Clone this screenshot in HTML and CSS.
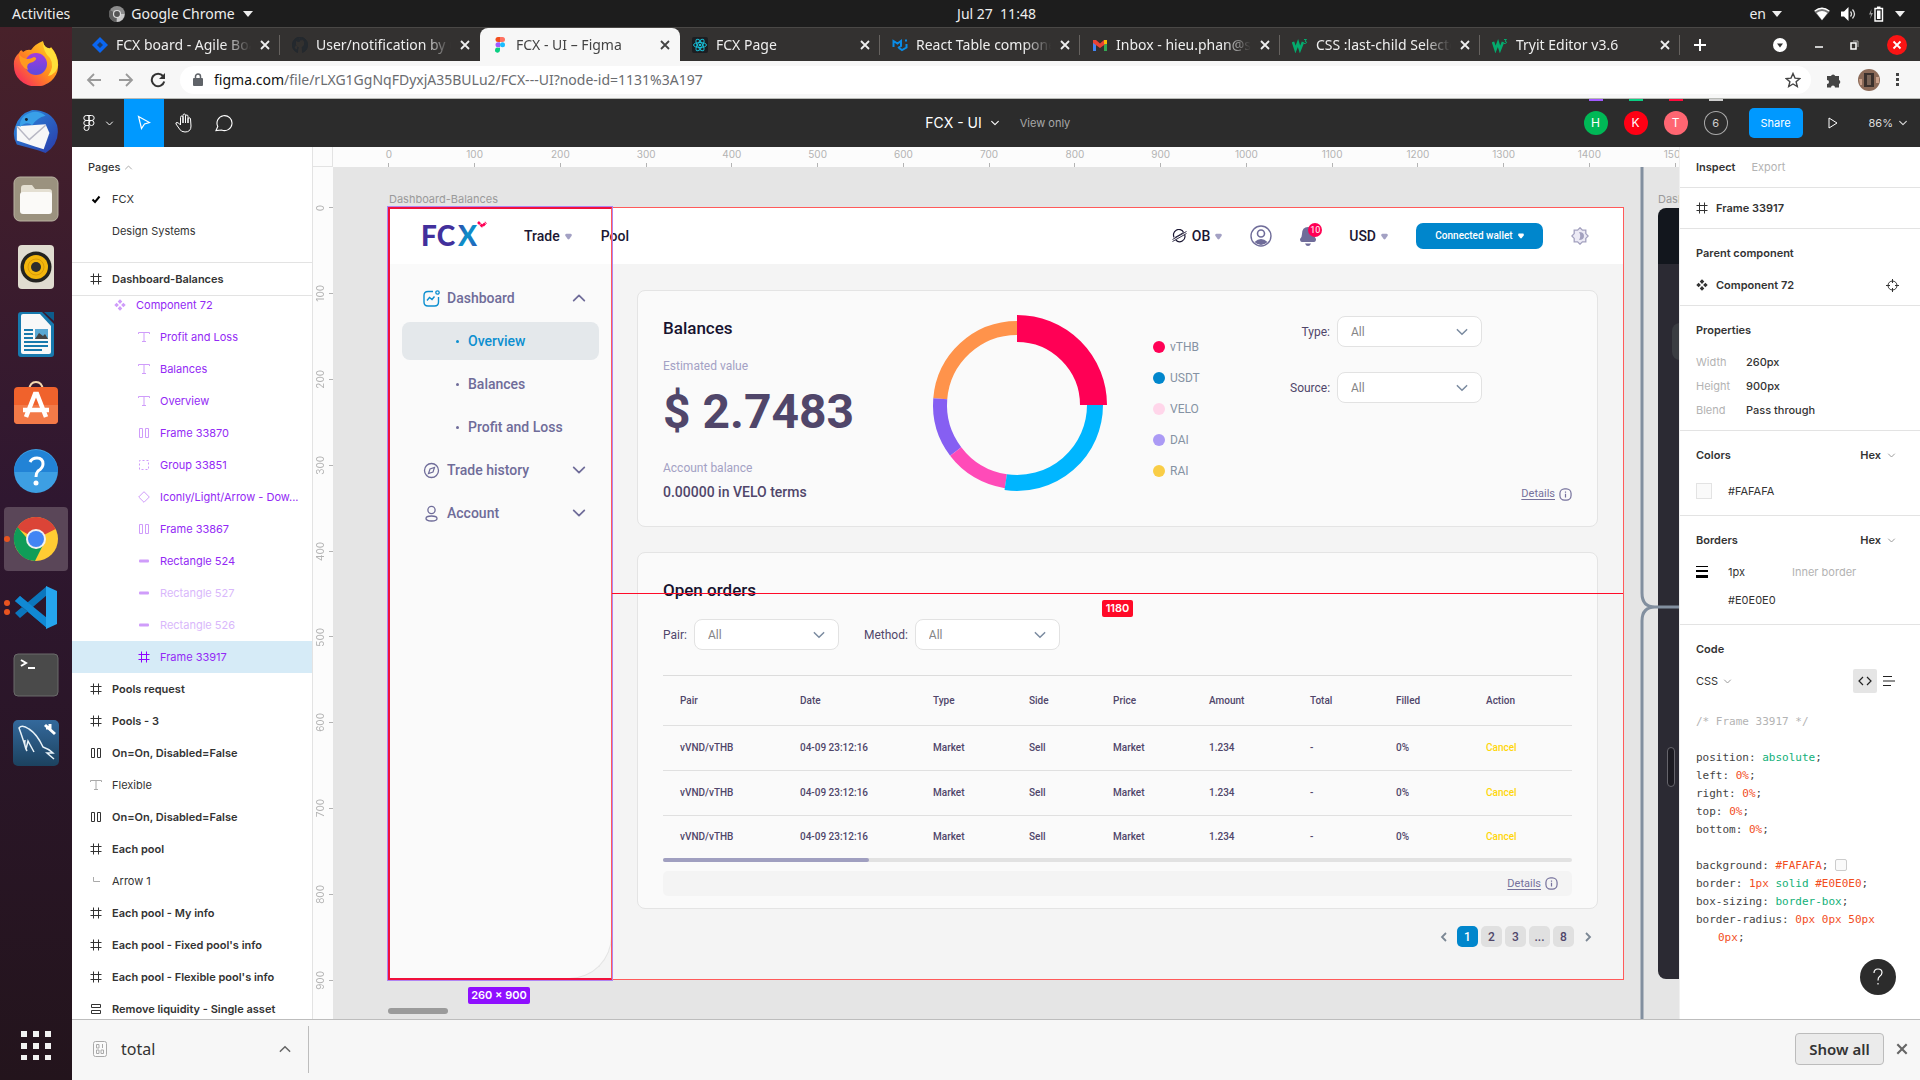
FILE: index.html
```html
<!DOCTYPE html>
<html lang="en">
<head>
<meta charset="utf-8">
<title>FCX - UI – Figma</title>
<link rel="stylesheet" href="styles.css">
</head>
<body>
<svg class="sprite" aria-hidden="true">
  <defs>
    <linearGradient id="g-x" x1="0" y1="0" x2="1" y2="1"><stop offset="0" stop-color="#3b2f9e"/><stop offset=".5" stop-color="#0e8fc9"/><stop offset="1" stop-color="#2a4fb5"/></linearGradient>
    <linearGradient id="g-fox" x1="1" y1="0" x2="0" y2="1"><stop offset="0" stop-color="#ffe226"/><stop offset=".5" stop-color="#ff8a1f"/><stop offset="1" stop-color="#f5156c"/></linearGradient>
    <linearGradient id="g-globe" x1="0" y1="0" x2="0" y2="1"><stop offset="0" stop-color="#a23be0"/><stop offset="1" stop-color="#5a4bdc"/></linearGradient>
    <linearGradient id="g-bird" x1="0" y1="0" x2="1" y2="1"><stop offset="0" stop-color="#2b8ee0"/><stop offset="1" stop-color="#2a3aa8"/></linearGradient>
    <linearGradient id="g-sea" x1="0" y1="0" x2="0" y2="1"><stop offset="0" stop-color="#34699c"/><stop offset="1" stop-color="#1c425f"/></linearGradient>
  </defs>
  <symbol id="i-frame" viewBox="0 0 12 12"><path d="M3.500 0.500v11M8.500 0.500v11M0.500 3.500h11M0.500 8.500h11" fill="none" stroke="currentColor"/></symbol>
  <symbol id="i-text" viewBox="0 0 12 12"><path d="M.5 3V1.500h11V3M6 1.500v9M4 10.500h4" fill="none" stroke="currentColor"/></symbol>
  <symbol id="i-cols" viewBox="0 0 12 12"><path d="M1.500 1.500h3v9h-3zM7.500 1.500h3v9h-3z" fill="none" stroke="currentColor"/></symbol>
  <symbol id="i-rows" viewBox="0 0 12 12"><path d="M1.500 1.500h9v3h-9zM1.500 7.500h9v3h-9z" fill="none" stroke="currentColor"/></symbol>
  <symbol id="i-group" viewBox="0 0 12 12"><path d="M1.500 1.500h9v9h-9z" fill="none" stroke="currentColor" stroke-dasharray="2 2" stroke-dashoffset="1"/></symbol>
  <symbol id="i-diamond" viewBox="0 0 12 12"><path d="M6 .7 11.300 6 6 11.300.7 6z" fill="none" stroke="currentColor"/></symbol>
  <symbol id="i-line" viewBox="0 0 12 12"><rect x="1" y="4.500" width="10" height="3" rx="1" fill="currentColor"/></symbol>
  <symbol id="i-elbow" viewBox="0 0 12 12"><path d="M3.500 2v4.500H10" fill="none" stroke="currentColor"/></symbol>
  <symbol id="i-comp" viewBox="0 0 12 12"><path d="M6 .3 8.300 2.600 6 4.900 3.700 2.600zM6 7.100l2.300 2.300L6 11.700 3.700 9.400zM2.600 3.700 4.900 6 2.600 8.300.3 6zM9.400 3.700 11.700 6 9.400 8.300 7.100 6z" fill="currentColor"/></symbol>
  <symbol id="i-down" viewBox="0 0 12 12"><path d="M2 4l4 4 4-4" fill="none" stroke="currentColor" stroke-width="1.300" stroke-linecap="round" stroke-linejoin="round"/></symbol>
  <symbol id="i-up" viewBox="0 0 12 12"><path d="M2 8l4-4 4 4" fill="none" stroke="currentColor" stroke-width="1.300" stroke-linecap="round" stroke-linejoin="round"/></symbol>
  <symbol id="i-x" viewBox="0 0 12 12"><path d="M2 2l8 8M10 2l-8 8" fill="none" stroke="currentColor" stroke-width="1.800"/></symbol>
  <symbol id="i-tri" viewBox="0 0 10 6"><path d="M0 0h10L5 6z" fill="currentColor"/></symbol>
  <symbol id="i-drop" viewBox="0 0 8 8"><path d="M1.500.8h5Q8.300 1.200 7.600 3.200L5 6.800Q4 7.800 3 6.800L.4 3.200Q-.3 1.200 1.500.8z" fill="currentColor"/></symbol>
  <symbol id="i-info" viewBox="0 0 14 14"><rect x="1" y="1" width="12" height="12" rx="5" fill="none" stroke="currentColor" stroke-width="1.300"/><path d="M7 6.200v4M7 3.800v1.200" stroke="currentColor" stroke-width="1.300"/></symbol>
  <symbol id="i-w3" viewBox="0 0 16 16"><path d="M1 5l2.500 7.500L6 6l2 6.500L11 5" fill="none" stroke="#04aa6d" stroke-width="2.600"/><path d="M12 2.500h2.500L13 4.200q2 .3 1.300 1.800-.8 1-2.300.4" fill="none" stroke="#04aa6d"/></symbol>
</svg>

<header class="sysbar">
  <div class="sys-left"><span>Activities</span>
    <span class="sys-app"><svg width="16" height="16" viewBox="0 0 16 16"><circle cx="8" cy="8" r="8" fill="#8c8c8c"/><path d="M8 8 1 4A8 8 0 0 0 7 16z" fill="#606060"/><path d="M8 8h7.500A8 8 0 0 1 8 16z" fill="#c9c9c9"/><circle cx="8" cy="8" r="3.500" fill="#555" stroke="#ddd" stroke-width="1.200"/></svg>Google Chrome<svg width="10" height="6"><use href="#i-tri"/></svg></span></div>
  <time class="clock">Jul 27&nbsp; 11:48</time>
  <div class="sys-right"><span class="lang">en<svg width="10" height="6"><use href="#i-tri"/></svg></span>
    <svg width="16" height="14" viewBox="0 0 16 14"><path d="M0 4Q8-2.500 16 4L8 13.500z" fill="#777"/><path d="M.8 4Q8-1.500 15.200 4" fill="none" stroke="#fff" stroke-width="1.300"/><path d="M2.500 6Q8 2 13.500 6L8 13z" fill="#fff"/></svg>
    <svg width="16" height="14" viewBox="0 0 16 14"><path d="M0 4.500h3L7.500 0v14L3 9.500H0z" fill="#fff"/><path d="M9.500 4.500q2 2.500 0 5M11.500 2.500q4 4.500 0 9" fill="none" stroke="#ddd" stroke-width="1.300"/></svg>
    <svg width="16" height="16" viewBox="0 0 16 16"><path d="M3.500 3 1 8.500h2L2 13l3-6H3z" fill="#999"/><path d="M7 2.500h7.500v12.500H7z" fill="none" stroke="#fff" stroke-width="1.400"/><path d="M9 4.500h3.500v8.500H9zM9 .5h3.500V2H9z" fill="#fff"/></svg>
    <svg width="10" height="6"><use href="#i-tri"/></svg></div>
</header>

<div class="desktop">
<nav class="dock" aria-label="Dock">
  <a href="#" aria-label="Firefox"><svg viewBox="0 0 46 46"><path d="M6 13Q8 8 10 12 14 9 18 10 22 4 30 1 31 8 36 10L38 7Q46 16 45 27A22 20 0 0 1 1 26Q0 18 6 13z" fill="url(#g-fox)"/><circle cx="23" cy="24" r="11" fill="url(#g-globe)"/><path d="M6 14Q12 22 21 17 26 18 20 22 12 23 15 30 6 26 6 14z" fill="#ff9a1f"/><path d="M30 2Q30 12 37 18 42 26 35 36 44 34 45 25 44 14 38 8 32 9 30 2z" fill="#ffe03a"/></svg></a>
  <a href="#" aria-label="Thunderbird"><svg viewBox="0 0 48 48"><path d="M2 20Q6 6 20 2 40 2 46 18 50 36 34 47L26 44 4 38Q-1 30 2 20z" fill="url(#g-bird)"/><path d="M4 19 34 17 38 26 32 43 22 40 4 34z" fill="#f7f7f7"/><path d="M4 19 17 33 34 18" fill="none" stroke="#b8b8c4" stroke-width="1.500"/><path d="M12 8Q24 0 34 8 25 10 20 18 14 13 7 20 7 12 12 8z" fill="#39a0e8"/><circle cx="14" cy="12" r="1.500" fill="#123"/></svg></a>
  <a href="#" aria-label="Files"><svg viewBox="0 0 46 46"><rect x="1" y="1" width="44" height="44" rx="6" fill="#9b927f" stroke="#b9b2a2"/><path d="M8 12q0-3 3-3h8l3 4h14q3 0 3 3v18H8z" fill="#e4dfd2"/><rect x="7" y="16" width="32" height="22" rx="3" fill="#fbfaf8"/></svg></a>
  <a href="#" aria-label="Rhythmbox"><svg viewBox="0 0 46 46"><rect x="5" y="1" width="36" height="44" rx="4" fill="#e0dcd0"/><circle cx="23" cy="23" r="15.500" fill="#23231f"/><circle cx="23" cy="23" r="12" fill="#f3b60c"/><circle cx="23" cy="23" r="8" fill="none" stroke="#d99a08"/><circle cx="23" cy="23" r="5" fill="#2d2d2d"/></svg></a>
  <a href="#" aria-label="Writer"><svg viewBox="0 0 46 46"><path d="M5 3q0-3 3-3h21l12 12v30q0 3-3 3H8q-3 0-3-3z" fill="#1779ad"/><path d="M8 4q0-2 2-2h17l11 12v26q0 2-2 2H10q-2 0-2-2z" fill="#f8f8f8"/><path d="M31 0h10v9z" fill="#0d5c8c"/><path d="M11 18h9M11 22h9M11 26h9M11 30h24M11 34h24M11 38h18" stroke="#1779ad" stroke-width="2"/><path d="M22 17h13v10H22z" fill="#59a8d4"/><path d="M22 27l4-6 4 3 2-2 3 5z" fill="#444"/></svg></a>
  <a href="#" aria-label="Software"><svg viewBox="0 0 46 46"><path d="M16 10Q17 2 23 2t7 8" fill="none" stroke="#f5d9b0" stroke-width="2"/><rect x="1" y="7" width="44" height="37" rx="4" fill="#f0622c"/><path d="M1 25h44v15q0 4-4 4H5q-4 0-4-4z" fill="#f37a48"/><path d="M13 37 22 14h2l9 23M10 30h26" fill="none" stroke="#fff" stroke-width="4.500"/></svg></a>
  <a href="#" aria-label="Help"><svg viewBox="0 0 46 46"><circle cx="23" cy="23" r="22" fill="#3d9fe3"/><path d="M1 24a22 22 0 0 1 44 0z" fill="#2283d6"/><path d="M17 14q2-4 7-4 6 0 6 6 0 4-5 7-2 2-2 6" fill="none" stroke="#fff" stroke-width="3"/><circle cx="23" cy="35" r="2.500" fill="#fff"/></svg></a>
  <a href="#" class="on dot1" aria-label="Chrome"><svg viewBox="0 0 46 46"><circle cx="23" cy="23" r="22" fill="#fc3"/><path d="M23 23 3.900 12A22 22 0 0 1 42.600 13z" fill="#db4437"/><path d="M23 33 4.500 11A22 22 0 0 0 22 45l8-16z" fill="#0f9d58"/><path d="M4.500 11.500A22 22 0 0 1 42.600 13H23z" fill="#db4437"/><circle cx="23" cy="23" r="10" fill="#f1f1f1"/><circle cx="23" cy="23" r="8" fill="#4285f4"/></svg></a>
  <a href="#" class="dot2" aria-label="VS Code"><svg viewBox="0 0 46 46"><path d="M2 17 7 12 34 36v8zM2 29l5 5L34 11V2z" fill="#0b76bd"/><path d="M2 17 7 12 34 34v10z" fill="#1189d4"/><path d="M33 2l11 5v33l-11 5z" fill="#25a5ee"/></svg></a>
  <a href="#" aria-label="Terminal"><svg viewBox="0 0 46 46"><rect x="1" y="2" width="44" height="42" rx="4" fill="#4a4a4a" stroke="#6a6a6a"/><path d="M8 8l5 3-5 3M15 16h7" fill="none" stroke="#fff" stroke-width="2"/></svg></a>
  <a href="#" aria-label="MySQL Workbench"><svg viewBox="0 0 46 46"><rect x="0" y="0" width="46" height="46" rx="5" fill="url(#g-sea)"/><path d="M13 29Q9 16 6 8 9 4 16 9 24 14 30 27 36 29 40 33L34 33 41 39M13 29 15 21 21 32M12 20Q11 26 14 31" fill="none" stroke="#e8f2f8" stroke-width="1.500"/><path d="M32 5l10 9M33 8h4V4" stroke="#fff" stroke-width="3" fill="none"/></svg></a>
  <button class="apps" aria-label="Show applications"><svg viewBox="0 0 30 30"><path d="M0 1h6v6H0zM12 1h6v6h-6zM24 1h6v6h-6zM0 13h6v6H0zM12 13h6v6h-6zM24 13h6v6h-6zM0 25h6v5H0zM12 25h6v5h-6zM24 25h6v5h-6z" fill="#f2f2f2"/></svg></button>
</nav>

<div class="browser">
  <div class="tabs">
    <div class="tab"><svg viewBox="0 0 16 16"><path d="M8 0l8 8-8 8-8-8z" fill="#0b66f0"/><path d="M8 5l3 3-3 3-3-3z" fill="#1c3d6e"/></svg><span>FCX board - Agile Board</span><button aria-label="Close tab"><svg><use href="#i-x"/></svg></button></div>
    <div class="tab"><svg viewBox="0 0 16 16"><path d="M8 0a8 8 0 0 0-2.500 15.500V13Q3 13 2.500 11M10.500 15.500A8 8 0 0 0 8 0v3q3-1 4 .5 1 5-2 6 .5 1 .5 6M8 3Q5 2 4 3.500q-1 5 2 6-.5 1-.5 6" fill="#24292e" stroke="#24292e"/><path d="M4 4l2 1h4l2-1v4l-2 2H6L4 8z" fill="#33312f"/></svg><span>User/notification by us</span><button aria-label="Close tab"><svg><use href="#i-x"/></svg></button></div>
    <div class="tab active"><svg viewBox="0 0 16 16"><path d="M6 0h2v5H6a2.500 2.500 0 0 1 0-5z" fill="#f24e1e"/><path d="M8 0h2.500a2.500 2.500 0 0 1 0 5H8z" fill="#ff7262"/><path d="M6 5.300h2v5H6a2.500 2.500 0 0 1 0-5z" fill="#a259ff"/><circle cx="10.500" cy="7.800" r="2.500" fill="#1abcfe"/><path d="M6 10.700h2v2.600a2.500 2.500 0 1 1-2-2.600z" fill="#0acf83"/></svg><span>FCX - UI – Figma</span><button aria-label="Close tab"><svg><use href="#i-x"/></svg></button></div>
    <div class="tab"><svg viewBox="0 0 16 16"><rect width="16" height="16" rx="2" fill="#1c1e22"/><g fill="none" stroke="#18bcd4"><ellipse cx="8" cy="8" rx="6.500" ry="2.500"/><ellipse cx="8" cy="8" rx="6.500" ry="2.500" transform="rotate(60 8 8)"/><ellipse cx="8" cy="8" rx="6.500" ry="2.500" transform="rotate(120 8 8)"/></g><circle cx="8" cy="8" r="1.300" fill="#18bcd4"/></svg><span>FCX Page</span><button aria-label="Close tab"><svg><use href="#i-x"/></svg></button></div>
    <div class="tab"><svg viewBox="0 0 16 16"><path d="M1.500 10V4l4 2.500L9 4v5l-3 2M7 11l3 2 4.500-2.500V7M14 2.500v2" fill="none" stroke="#0a8ce6" stroke-width="2"/></svg><span>React Table component</span><button aria-label="Close tab"><svg><use href="#i-x"/></svg></button></div>
    <div class="tab"><svg viewBox="0 0 16 16"><path d="M1 4h3v10H1z" fill="#4285f4"/><path d="M12 4h3v10h-3z" fill="#34a853"/><path d="M1 3l3 0 4 3.500L12 3h3v3L8 11 1 6z" fill="#ea4335"/><path d="M12 3h3v4h-3z" fill="#fbbc04"/></svg><span>Inbox - hieu.phan@sotatek</span><button aria-label="Close tab"><svg><use href="#i-x"/></svg></button></div>
    <div class="tab"><svg><use href="#i-w3"/></svg><span>CSS :last-child Selector</span><button aria-label="Close tab"><svg><use href="#i-x"/></svg></button></div>
    <div class="tab"><svg><use href="#i-w3"/></svg><span>Tryit Editor v3.6</span><button aria-label="Close tab"><svg><use href="#i-x"/></svg></button></div>
    <div class="winctl">
      <button aria-label="New tab"><svg width="14" height="14"><path d="M7 1v12M1 7h12" stroke="#fff" stroke-width="2"/></svg></button>
      <button class="search" aria-label="Search tabs"><svg width="14" height="14"><circle cx="7" cy="7" r="7" fill="#fff"/><path d="M4 5.500h6L7 9.500z" fill="#333"/></svg></button>
      <button aria-label="Minimize"><svg width="8" height="14"><path d="M0 9h8" stroke="#fff" stroke-width="1.500"/></svg></button>
      <button aria-label="Restore"><svg width="9" height="10"><path d="M1 3h5v6H1z" fill="none" stroke="#fff" stroke-width="1.500"/><path d="M3 1h5v6" fill="none" stroke="#aaa"/></svg></button>
      <button aria-label="Close"><svg width="20" height="20"><circle cx="10" cy="10" r="10" fill="#fa1414"/><path d="M6.500 6.500l7 7M13.500 6.500l-7 7" stroke="#fff" stroke-width="1.800"/></svg></button>
    </div>
  </div>
  <div class="navbar">
    <button aria-label="Back"><svg width="16" height="16"><path d="M15 8H2M8 2L2 8l6 6" fill="none" stroke="#9a9a9a" stroke-width="1.800"/></svg></button>
    <button aria-label="Forward"><svg width="16" height="16"><path d="M1 8h13M8 2l6 6-6 6" fill="none" stroke="#9a9a9a" stroke-width="1.800"/></svg></button>
    <button aria-label="Reload"><svg width="16" height="16"><path d="M13 4A6.300 6.300 0 1 0 14.200 9.500" fill="none" stroke="#333" stroke-width="2"/><path d="M15 1v6H9z" fill="#333"/></svg></button>
    <div class="omni"><svg width="10" height="13"><rect y="5" width="10" height="8" rx="1" fill="#5f6368"/><path d="M2.500 5V3.500a2.500 2.500 0 0 1 5 0V5" fill="none" stroke="#5f6368" stroke-width="1.500"/></svg><span class="url"><b>figma.com</b>/file/rLXG1GgNqFDyxjA35BULu2/FCX---UI?node-id=1131%3A197</span><button aria-label="Bookmark"><svg width="16" height="16"><path d="M8 1.500l2 4.600 4.800.4-3.700 3.200 1.200 4.800L8 12l-4.300 2.500 1.200-4.800L1.200 6.500 6 6.100z" fill="none" stroke="#444" stroke-width="1.400"/></svg></button></div>
    <button aria-label="Extensions"><svg width="16" height="16"><path d="M1 4h4a2.200 2.200 0 0 1 4.200 0H13v4a2.200 2.200 0 0 1 0 4v3.500H9a2 2 0 0 0-4 0H1V12a2 2 0 0 0 0-4z" fill="#444"/></svg></button>
    <button aria-label="Profile"><svg width="22" height="22"><circle cx="11" cy="11" r="11" fill="#8b6a58"/><path d="M6 4h10v14H6z" fill="#3a302c"/><path d="M9 6h4v10H9z" fill="#7a6558"/><path d="M1 10h3v6H2zM18 8h3v6h-3z" fill="#c9a08a"/></svg></button>
    <button aria-label="Menu"><svg width="4" height="14"><path d="M0 0h3v3H0zM0 5h3v3H0zM0 10h3v3H0z" fill="#444"/></svg></button>
  </div>

  <div class="figbar">
    <button class="main-menu" aria-label="Main menu"><svg width="12" height="16"><path d="M6 .5H3.300a2.400 2.400 0 0 0 0 5H6zM6 .5h2.700a2.400 2.400 0 0 1 0 5H6zM6 5.500H3.300a2.400 2.400 0 0 0 0 5H6zM6 10.500H3.300A2.500 2.500 0 1 0 6 13z" fill="none" stroke="#fff"/><circle cx="8.500" cy="8" r="2.500" fill="none" stroke="#fff"/></svg><svg width="9" height="9"><use href="#i-down"/></svg></button>
    <button class="tool sel" aria-label="Move"><svg width="14" height="16"><path d="M1.500 1.500l11 6-5 1.500-3 4.500z" fill="none" stroke="#fff" stroke-width="1.200"/></svg></button>
    <button class="tool" aria-label="Hand"><svg width="18" height="20"><path d="M5.500 12V4.500q0-1.500 1.300-1.500T8 4.500V10 2.500Q8 1 9.300 1t1.200 1.500V10 3.500Q10.500 2 11.800 2T13 3.500V10 6Q13 4.800 14.200 4.800T15.500 6l.5 7q0 6-6 6-4 0-5.500-3L1 11q-.5-1.500 1-1.500t3.500 2.500" fill="none" stroke="#fff"/></svg></button>
    <button class="tool" aria-label="Comment"><svg width="18" height="18"><path d="M1 16.500l1.800-4A7.500 7.500 0 1 1 6.500 16z" fill="none" stroke="#fff" stroke-width="1.100"/></svg></button>
    <div class="doc"><span class="doc-name">FCX - UI</span><svg width="10" height="10"><use href="#i-down"/></svg><span class="doc-mode">View only</span></div>
    <div class="people"><span class="av av-h">H</span><span class="av av-k">K</span><span class="av av-t">T</span><span class="av av-more">6</span></div>
    <button class="share">Share</button>
    <button class="play" aria-label="Present"><svg width="10" height="12"><path d="M1 1l8 5-8 5z" fill="none" stroke="#fff"/></svg></button>
    <button class="zoom">86%<svg width="10" height="10"><use href="#i-down"/></svg></button>
  </div>

  <div class="editor">
    <aside class="layers">
      <section class="pages">
        <h2>Pages <svg width="9" height="9"><use href="#i-up"/></svg></h2>
        <a href="#"><svg width="10" height="10"><path d="M1.500 5.500l2.500 2.500 4.500-5.500" fill="none" stroke="#000" stroke-width="2"/></svg>FCX</a>
        <a href="#">Design Systems</a>
      </section>
      <div class="layer top current"><svg><use href="#i-frame"/></svg>Dashboard-Balances</div>
      <div class="tree"><ul>
        <li class="layer l1 soft"><svg><use href="#i-comp"/></svg>Component 72</li>
        <li class="layer l2 soft"><svg><use href="#i-text"/></svg>Profit and Loss</li>
        <li class="layer l2 soft"><svg><use href="#i-text"/></svg>Balances</li>
        <li class="layer l2 soft"><svg><use href="#i-text"/></svg>Overview</li>
        <li class="layer l2 soft"><svg><use href="#i-cols"/></svg>Frame 33870</li>
        <li class="layer l2 soft"><svg><use href="#i-group"/></svg>Group 33851</li>
        <li class="layer l2 soft"><svg><use href="#i-diamond"/></svg>Iconly/Light/Arrow - Dow...</li>
        <li class="layer l2 soft"><svg><use href="#i-cols"/></svg>Frame 33867</li>
        <li class="layer l2 soft"><svg><use href="#i-line"/></svg>Rectangle 524</li>
        <li class="layer l2 soft hid"><svg><use href="#i-line"/></svg>Rectangle 527</li>
        <li class="layer l2 soft hid"><svg><use href="#i-line"/></svg>Rectangle 526</li>
        <li class="layer l2 picked"><svg><use href="#i-frame"/></svg>Frame 33917</li>
        <li class="layer top"><svg><use href="#i-frame"/></svg>Pools request</li>
        <li class="layer top"><svg><use href="#i-frame"/></svg>Pools - 3</li>
        <li class="layer top"><svg><use href="#i-cols"/></svg>On=On, Disabled=False</li>
        <li class="layer plain"><svg><use href="#i-text"/></svg>Flexible</li>
        <li class="layer top"><svg><use href="#i-cols"/></svg>On=On, Disabled=False</li>
        <li class="layer top"><svg><use href="#i-frame"/></svg>Each pool</li>
        <li class="layer plain"><svg><use href="#i-elbow"/></svg>Arrow 1</li>
        <li class="layer top"><svg><use href="#i-frame"/></svg>Each pool - My info</li>
        <li class="layer top"><svg><use href="#i-frame"/></svg>Each pool - Fixed pool's info</li>
        <li class="layer top"><svg><use href="#i-frame"/></svg>Each pool - Flexible pool's info</li>
        <li class="layer top"><svg><use href="#i-rows"/></svg>Remove liquidity - Single asset</li>
      </ul></div>
    </aside>

    <main class="canvas">
      <div class="corner"></div>
      <div class="ruler rx"><ol><li>0</li><li>100</li><li>200</li><li>300</li><li>400</li><li>500</li><li>600</li><li>700</li><li>800</li><li>900</li><li>1000</li><li>1100</li><li>1200</li><li>1300</li><li>1400</li><li>1500</li></ol></div>
      <div class="ruler ry"><ol><li><span>0</span></li><li><span>100</span></li><li><span>200</span></li><li><span>300</span></li><li><span>400</span></li><li><span>500</span></li><li><span>600</span></li><li><span>700</span></li><li><span>800</span></li><li><span>900</span></li></ol></div>
      <div class="stage">
        <span class="label label-a">Dashboard-Balances</span>
        <span class="label label-b">Dashboard-Balances</span>
        <div class="board">
          <header class="app-head">
            <svg class="logo" width="64" height="28" viewBox="0 0 64 28" role="img" aria-label="FCX"><text class="logo-fc" x="-2" y="25">FC</text><text class="logo-x" x="35" y="25" fill="url(#g-x)">X</text><path d="M55 1l5 5M60 4.500l3-3" fill="none" stroke="#f05" stroke-width="2.600" stroke-dasharray="3 .5"/></svg>
            <nav class="app-nav"><a href="#">Trade <svg width="7" height="7"><use href="#i-drop"/></svg></a><a href="#">Pool</a></nav>
            <div class="app-tools">
              <button class="pick"><svg width="15" height="14" viewBox="0 0 15 14"><path d="M2.200 8.500A5.300 5.300 0 0 1 11.500 3.200M12.700 5.800A5.300 5.300 0 0 1 3.800 11" fill="none" stroke="#1b1733" stroke-width="1.200"/><path d="M.5 10.500 14.500 2.500M.5 12.500 14.500 4.500M3 8.500l8.500-5" stroke="#1b1733" stroke-width=".9"/></svg>OB<svg class="dd" width="7" height="7"><use href="#i-drop"/></svg></button>
              <button aria-label="Profile"><svg width="22" height="22" viewBox="0 0 22 22"><circle cx="11" cy="11" r="10" fill="none" stroke="#6f6c99" stroke-width="1.400"/><circle cx="11" cy="8.500" r="3.500" fill="none" stroke="#6f6c99" stroke-width="1.600"/><path d="M4.500 17Q11 11 17.500 17 11 23 4.500 17z" fill="#6f6c99"/></svg></button>
              <button class="bell" aria-label="Notifications"><svg width="17" height="19" viewBox="0 0 17 19"><path d="M8 0q6 0 6 7 .5 3 2 5 0 3-2 3H2q-2 0-2-3 2-2 2-5 0-7 6-7zM5 16.500h6q-1 2.500-3 2.500t-3-2.500z" fill="#6f6c99"/></svg><span>10</span></button>
              <button class="pick usd">USD<svg class="dd" width="7" height="7"><use href="#i-drop"/></svg></button>
              <button class="wallet">Connected wallet <svg width="6" height="6"><use href="#i-drop"/></svg></button>
              <button aria-label="Theme"><svg width="18" height="18" viewBox="0 0 18 18"><path d="M9 .8l2.400 2.400h3.400v3.400L17.200 9l-2.400 2.400v3.400h-3.400L9 17.200l-2.400-2.400H3.200v-3.400L.8 9l2.400-2.400V3.200h3.400z" fill="#eceaf5" stroke="#a3a1bf" stroke-width="1.300"/><path d="M8 5q5 0 5 4t-5 4q2.500-4 0-8z" fill="#a3a1bf"/></svg></button>
            </div>
          </header>
          <aside class="side">
            <a class="item" href="#"><svg width="17" height="17" viewBox="0 0 17 17"><path d="M10 1.500H5Q1 1.500 1 5.500v6.500q0 4 4 4h6.500q4 0 4-4V7" fill="none" stroke="#0c8fd0" stroke-width="1.400"/><path d="M4 10.500l2.500-3 2.500 2 2.500-3" fill="none" stroke="#0c8fd0" stroke-width="1.400"/><circle cx="14.500" cy="2.500" r="1.700" fill="none" stroke="#0c8fd0" stroke-width="1.300"/></svg>Dashboard<svg class="chev"><use href="#i-up"/></svg></a>
            <a class="sub cur" href="#">Overview</a>
            <a class="sub" href="#">Balances</a>
            <a class="sub" href="#">Profit and Loss</a>
            <a class="item" href="#"><svg width="17" height="17" viewBox="0 0 17 17"><circle cx="8.500" cy="8.500" r="7" fill="none" stroke="#6f6c99" stroke-width="1.300"/><path d="M11.500 5.500l-1.500 4.500-4.500 1.500L7 7z" fill="none" stroke="#6f6c99" stroke-width="1.200"/></svg>Trade history<svg class="chev"><use href="#i-down"/></svg></a>
            <a class="item" href="#"><svg width="17" height="17" viewBox="0 0 17 17"><circle cx="8.500" cy="5" r="3.600" fill="none" stroke="#6f6c99" stroke-width="1.300"/><ellipse cx="8.500" cy="13.500" rx="5.500" ry="2.500" fill="none" stroke="#6f6c99" stroke-width="1.300"/></svg>Account<svg class="chev"><use href="#i-down"/></svg></a>
          </aside>
          <div class="content">
            <section class="card balances">
              <div class="sums"><h3>Balances</h3><p class="cap">Estimated value</p><p class="big">$ 2.7483</p><p class="cap">Account balance</p><p class="terms">0.00000 in VELO terms</p></div>
              <svg class="donut" width="180" height="180" viewBox="-90 -90 180 180"><g fill="none">
                <path d="M-76.750 -6.200A77 77 0 0 1 0 -77" stroke="#ff934b" stroke-width="14"/>
                <path d="M-61.300 46.500A77 77 0 0 1 -76.750 -6.200" stroke="#865ff2" stroke-width="14"/>
                <path d="M-11.100 76.200A77 77 0 0 1 -61.300 46.500" stroke="#ff4bb8" stroke-width="14"/>
                <path d="M78 0A78 78 0 0 1 -11.300 77.200" stroke="#00b6ff" stroke-width="16"/>
                <path d="M0 -76.500A76.500 76.500 0 0 1 76.500 0" stroke="#ff0055" stroke-width="27"/></g></svg>
              <ul class="legend"><li class="c1">vTHB</li><li class="c2">USDT</li><li class="c3">VELO</li><li class="c4">DAI</li><li class="c5">RAI</li></ul>
              <div class="filters-v">
                <label for="f-type">Type:</label><div class="select"><select id="f-type"><option>All</option></select><svg><use href="#i-down"/></svg></div>
                <label for="f-source">Source:</label><div class="select"><select id="f-source"><option>All</option></select><svg><use href="#i-down"/></svg></div>
              </div>
              <a class="details" href="#"><span>Details</span><svg width="13" height="13"><use href="#i-info"/></svg></a>
            </section>
            <section class="card orders">
              <h3>Open orders</h3>
              <div class="filters-h">
                <label for="f-pair">Pair:</label><div class="select"><select id="f-pair"><option>All</option></select><svg><use href="#i-down"/></svg></div>
                <label for="f-method">Method:</label><div class="select"><select id="f-method"><option>All</option></select><svg><use href="#i-down"/></svg></div>
              </div>
              <table>
                <colgroup><col class="w120"><col class="w133"><col class="w96"><col class="w84"><col class="w96"><col class="w101"><col class="w86"><col class="w90"><col></colgroup>
                <thead><tr><th>Pair</th><th>Date</th><th>Type</th><th>Side</th><th>Price</th><th>Amount</th><th>Total</th><th>Filled</th><th>Action</th></tr></thead>
                <tbody>
                  <tr><td>vVND/vTHB</td><td>04-09 23:12:16</td><td>Market</td><td>Sell</td><td>Market</td><td>1.234</td><td>-</td><td>0%</td><td><button>Cancel</button></td></tr>
                  <tr><td>vVND/vTHB</td><td>04-09 23:12:16</td><td>Market</td><td>Sell</td><td>Market</td><td>1.234</td><td>-</td><td>0%</td><td><button>Cancel</button></td></tr>
                  <tr><td>vVND/vTHB</td><td>04-09 23:12:16</td><td>Market</td><td>Sell</td><td>Market</td><td>1.234</td><td>-</td><td>0%</td><td><button>Cancel</button></td></tr>
                </tbody>
              </table>
              <div class="track"><div class="thumb"></div></div>
              <div class="foot"><a class="details" href="#"><span>Details</span><svg width="13" height="13"><use href="#i-info"/></svg></a></div>
            </section>
            <nav class="pager" aria-label="Pages"><button class="arrow" aria-label="Previous"><svg width="12" height="12"><path d="M8 2L4 6l4 4" fill="none" stroke="#7b8794" stroke-width="1.800"/></svg></button><button class="now">1</button><button>2</button><button>3</button><button>...</button><button>8</button><button class="arrow" aria-label="Next"><svg width="12" height="12"><path d="M4 2l4 4-4 4" fill="none" stroke="#7b8794" stroke-width="1.800"/></svg></button></nav>
          </div>
          <div class="sel-frame"></div><span class="size">260 × 900</span>
          <div class="measure"><span>1180</span></div>
        </div>
        <div class="board-dark"><i class="chip"></i><i class="pill"></i></div>
        <svg class="wire" width="40" height="852" viewBox="0 0 40 852"><path d="M3 0V426Q3 440 16 440H40M3 852V454Q3 440 16 440" fill="none" stroke="#828f9f" stroke-width="3"/></svg>
        <div class="hscroll"></div>
      </div>
    </main>

    <aside class="inspect">
      <div class="modes"><a href="#" class="cur">Inspect</a><a href="#">Export</a></div>
      <div class="sec name"><svg width="12" height="12"><use href="#i-frame"/></svg>Frame 33917</div>
      <section class="sec"><h2>Parent component</h2><div class="row32 strong"><svg width="12" height="12"><use href="#i-comp"/></svg>Component 72<button class="end" aria-label="Go to component"><svg width="13" height="13"><circle cx="6.500" cy="6.500" r="4.500" fill="none" stroke="#333"/><path d="M6.500 0v4M6.500 9v4M0 6.500h4M9 6.500h4" stroke="#333"/></svg></button></div></section>
      <section class="sec props"><h2>Properties</h2><dl><dt>Width</dt><dd>260px</dd><dt>Height</dt><dd>900px</dd><dt>Blend</dt><dd>Pass through</dd></dl></section>
      <section class="sec colors"><h2>Colors<button class="hex">Hex<svg width="9" height="9"><use href="#i-down"/></svg></button></h2><div class="val"><i class="swatch"></i><span>#FAFAFA</span></div></section>
      <section class="sec borders"><h2>Borders<button class="hex">Hex<svg width="9" height="9"><use href="#i-down"/></svg></button></h2><div class="val"><svg width="12" height="12"><path d="M0 0h12v1H0zM0 4h12v2H0zM0 9h12v3H0z"/></svg><span>1px</span><em>Inner border</em></div><div class="val"><span class="alone">#E0E0E0</span></div></section>
      <section class="code"><h2>Code</h2>
        <div class="lang-row"><button>CSS<svg width="9" height="9"><use href="#i-down"/></svg></button><button class="tg on" aria-label="Code"><svg width="14" height="10"><path d="M5 1L1 5l4 4M9 1l4 4-4 4" fill="none" stroke="#222" stroke-width="1.200"/></svg></button><button class="tg" aria-label="Table"><svg width="12" height="10"><path d="M0 .5h9M0 5h12M0 9.500h8" stroke="#222"/></svg></button></div>
        <pre><i>/* Frame 33917 */</i>

position: <u>absolute</u>;
left: <b>0%</b>;
right: <b>0%</b>;
top: <b>0%</b>;
bottom: <b>0%</b>;

background: <b>#FAFAFA</b>; <span class="mini"></span>
border: <b>1px</b> <u>solid</u> <b>#E0E0E0</b>;
box-sizing: <u>border-box</u>;
<span class="hang">border-radius: <b>0px 0px 50px 0px</b>;</span></pre>
      </section>
      <button class="help" aria-label="Help"><svg width="12" height="18"><path d="M2 5q0-4 4-4t4 3.500q0 2.500-2.500 4Q6 9.500 6 12.500M6 15v1.500" fill="none" stroke="#fff" stroke-width="1.200"/></svg></button>
    </aside>
  </div>

  <footer class="shelf">
    <button class="file"><svg width="14" height="16" viewBox="0 0 14 16"><rect x=".5" y=".5" width="13" height="15" rx="2" fill="#fafafa" stroke="#aaa"/><path d="M3.500 3.500h2.500v3.500H3.500zM9.500 3v4M3.500 9h2.500v3.500H3.500zM8 9h2.500v3.500H8z" fill="none" stroke="#aaa"/></svg><span>total</span><svg class="caret" width="14" height="14"><use href="#i-up"/></svg></button>
    <button class="show">Show all</button>
    <button class="bye" aria-label="Close"><svg width="14" height="14"><use href="#i-x"/></svg></button>
  </footer>
</div>
</div>
</body>
</html>
```
FILE: styles.css
```css
* { box-sizing: border-box; }
html, body { height: 100%; }
body { margin: 0; display: flex; flex-direction: column; overflow: hidden; font: 11px/16px Inter, sans-serif; color: #333; background: #fff; }
button { border: 0; background: none; padding: 0; margin: 0; font: inherit; color: inherit; display: flex; align-items: center; justify-content: center; }
a { color: inherit; text-decoration: none; }
ul, ol, dl, dd, p, h2, h3, pre { margin: 0; padding: 0; list-style: none; font-size: inherit; font-weight: inherit; }
svg { flex: none; display: block; }
.sprite { position: absolute; width: 0; height: 0; }

/* system bar */
.sysbar { flex: 0 0 27px; display: grid; grid-template-columns: 1fr auto 1fr; align-items: center; background: #1d1d1d; color: #eee; font: 14px/26px "Noto Sans", sans-serif; padding: 0 15px 0 12px; }
.sys-left, .sys-right, .sys-app, .lang { display: flex; align-items: center; }
.sys-left { gap: 39px; }
.sys-app { gap: 6px; }
.sys-app svg:last-child { margin-left: 2px; }
.clock { padding-left: 76px; }
.sys-right { justify-content: flex-end; gap: 11px; }
.lang { gap: 6px; margin-right: 21px; }

.desktop { flex: 1; min-height: 0; display: flex; }
.dock { flex: 0 0 72px; display: flex; flex-direction: column; align-items: center; gap: 4px; background: linear-gradient(#48212a, #2f1730 45%, #23141c); }
.dock a { position: relative; width: 64px; height: 64px; display: grid; place-items: center; border-radius: 4px; }
.dock a:first-child { margin-top: 4px; }
.dock a svg { width: 46px; height: 46px; }
.dock .on { background: #5a4658; }
.dot1::before, .dot2::before, .dot2::after { content: ""; position: absolute; left: 0; top: 29px; width: 6px; height: 6px; border-radius: 3px; background: #e95420; }
.dot2::before { top: 25px; }
.dot2::after { top: 34px; }
.apps { margin-top: auto; margin-bottom: 20px; }
.apps svg { width: 30px; height: 30px; }

.browser { flex: 1; min-width: 0; display: flex; flex-direction: column; }

/* tab strip */
.tabs { flex: 0 0 34px; display: flex; background: #333130; border-top: 1px solid #4a4846; padding-left: 8px; font: 14px/31px "Noto Sans", sans-serif; color: #eee; }
.tab { flex: 1 1 200px; max-width: 200px; min-width: 0; display: flex; align-items: center; gap: 8px; padding: 0 9px 0 12px; position: relative; }
.tab > svg { width: 16px; height: 16px; }
.tab span { flex: 1; min-width: 0; overflow: hidden; white-space: nowrap; mask-image: linear-gradient(90deg, #000 80%, transparent); }
.tab button svg { width: 12px; height: 12px; }
.tab:not(.active)::after { content: ""; position: absolute; right: 0; top: 7px; height: 20px; width: 1px; background: #66625f; }
.tab:nth-child(2)::after { display: none; }
.tab.active { background: #f7f7f7; color: #444; border-radius: 8px 8px 0 0; }
.winctl { flex: 0 0 240px; display: flex; align-items: center; padding: 0 13px; justify-content: space-between; }
.winctl .search { margin-left: 38px; }

/* address row */
.navbar { flex: 0 0 38px; display: flex; align-items: center; gap: 16px; background: #f7f7f7; border-bottom: 1px solid #b8bab6; padding: 0 20px 0 14px; }
.omni { flex: 1; display: flex; align-items: center; height: 28px; border-radius: 14px; background: #fff; padding: 0 10px 0 13px; margin-right: -1px; margin-left: -2px; }
.url { flex: 1; padding-left: 11px; font: 14px/26px "Noto Sans", sans-serif; color: #6a6c70; }
.url b { font-weight: 400; color: #111; }

/* editor toolbar */
.figbar { flex: 0 0 48px; display: flex; align-items: stretch; background: #2c2c2c; color: #fff; position: relative; padding-right: 12px; }
.main-menu { width: 52px; gap: 10px; padding-left: 1px; }
.tool { width: 40px; }
.sel { background: #0099ff; }
.doc { flex: 1; display: flex; align-items: center; justify-content: center; gap: 8px; padding-left: 168px; }
.doc-name { font-size: 14px; }
.doc-mode { padding-left: 12px; color: #a8a8a8; }
.people { display: flex; align-items: center; gap: 16px; margin-right: 21px; }
.av { width: 24px; height: 24px; border-radius: 12px; text-align: center; line-height: 24px; font-size: 12px; position: relative; }
.av::before { content: ""; position: absolute; left: 5px; top: -12px; width: 14px; height: 2px; background: #d0d0d0; }
.av-h { background: #00b856; } .av-h::before { background: #a259ff; }
.av-k { background: #ff0014; } .av-k::before { background: #0acf83; }
.av-t { background: #ff6672; } .av-t::before { background: #ff0a3c; }
.av-more { box-shadow: inset 0 0 0 1px #aaa; color: #ccc; font-size: 11px; }
.share { align-self: center; width: 54px; height: 30px; border-radius: 5px; background: #0099ff; }
.play { width: 60px; }
.zoom { gap: 5px; padding-left: 6px; color: #ddd; }

.editor { flex: 1; min-height: 0; display: flex; }

/* layers */
.layers { flex: 0 0 241px; border-right: 1px solid #e3e3e3; display: flex; flex-direction: column; }
.pages { border-bottom: 1px solid #e3e3e3; height: 116px; padding: 4px 16px 0; }
.pages h2 { font-weight: 500; line-height: 32px; display: flex; align-items: center; gap: 4px; }
.pages h2 svg { color: #aaa; }
.pages a { display: flex; align-items: center; line-height: 32px; padding-left: 24px; }
.pages a svg { margin-left: -21px; margin-right: 11px; }
.layer { display: flex; align-items: center; height: 32px; gap: 10px; padding-left: 18px; white-space: nowrap; }
.layer svg { width: 12px; height: 12px; }
.top { font-weight: 600; }
.current { flex: 0 0 33px; border-bottom: 1px solid #e3e3e3; }
.tree { flex: 1; min-height: 0; overflow: hidden; }
.tree ul { margin-top: -7px; }
.l1 { padding-left: 42px; color: #9329f5; }
.l2 { padding-left: 66px; color: #9329f5; }
.soft svg { color: #cf9cfa; }
.hid { color: #d9b8fb; }
.picked { background: #d6ebf7; }
.picked svg { color: #9000ff; }
.plain svg { color: #aaa; }

/* canvas */
.canvas { flex: 1; min-width: 0; display: grid; grid-template: 20px 1fr / 20px 1fr; background: #e5e5e5; overflow: hidden; }
.corner { background: #fcfcfc; border-right: 1px solid #e3e3e3; border-bottom: 1px solid #e3e3e3; }
.ruler { background: #fcfcfc; color: #b3b3b3; overflow: hidden; font-size: 10px; line-height: 14px; min-width: 0; min-height: 0; }
.ruler ol { display: grid; }
.rx ol { grid-template-columns: repeat(16, 1fr); width: 1372px; margin-left: 13px; }
.rx li { text-align: center; height: 20px; background: linear-gradient(#b3b3b3, #b3b3b3) center bottom / 1px 4px no-repeat; }
.ry ol { grid-template-rows: repeat(10, 1fr); height: 858px; margin-top: -2px; }
.ry li { display: flex; align-items: center; background: linear-gradient(#b3b3b3, #b3b3b3) right center / 4px 1px no-repeat; }
.ry span { writing-mode: vertical-rl; transform: rotate(180deg); }
.stage { position: relative; overflow: hidden; min-width: 0; min-height: 0; }
.label { position: absolute; top: 24px; color: #9a9a9a; white-space: nowrap; }
.label-a { left: 56px; }
.label-b { left: 1325px; }
.board { position: absolute; left: 56px; top: 41px; width: 1234px; height: 771px; display: grid; grid-template: 56px 1fr / 223px 1fr; background: #f4f4f4; outline: 1px solid #ff5a5a; font-family: Roboto, sans-serif; font-size: 12px; color: #50466a; }
.app-head { grid-column: 1 / 3; background: #fff; display: flex; align-items: center; padding: 0 34px; color: #1b1733; font-size: 14px; font-weight: 500; }
.logo { margin-top: -3px; overflow: visible; }
.logo text { font: 900 28px Lato, sans-serif; }
.logo-fc { fill: #42309c; }
.app-nav { display: flex; gap: 29px; margin-left: 37px; }
.app-nav a { display: flex; align-items: center; gap: 5px; }
.app-nav svg, .dd { color: #a3a1c4; }
.app-tools { margin-left: auto; display: flex; align-items: center; gap: 28px; }
.pick { gap: 5px; }
.bell { position: relative; }
.bell span { position: absolute; left: 8px; top: -4px; width: 14px; height: 14px; border-radius: 7px; background: #f05; color: #fff; font-size: 9px; line-height: 14px; font-weight: 400; }
.usd { margin-left: 4px; }
.wallet { width: 127px; height: 26px; gap: 5px; border-radius: 7px; background: #0086cc; color: #fff; font-size: 10px; }
.side { background: #fafafa; border: 1px solid #e4e4e4; border-top: 0; border-radius: 0 0 43px 0; padding: 15px 12px 0; color: #6f6c99; font-size: 14px; font-weight: 500; display: flex; flex-direction: column; gap: 5px; }
.item, .sub { height: 38px; display: flex; align-items: center; border-radius: 8px; }
.item { padding: 0 12px 0 21px; gap: 7px; }
.chev { width: 16px; height: 16px; margin-left: auto; }
.sub { padding-left: 54px; }
.sub::before { content: ""; width: 3px; height: 3px; border-radius: 2px; background: currentColor; margin-right: 9px; }
.sub.cur { background: #e4e8eb; color: #0c8fd0; }
.content { padding: 26px 25px 0; display: flex; flex-direction: column; }
.card { background: #fafafa; border: 1px solid #e4e4e4; border-radius: 8px; }
.card h3 { font-size: 17px; line-height: 20px; font-weight: 500; color: #17132f; }
.balances { height: 237px; display: flex; padding: 24px 25px; margin-bottom: 25px; }
.sums { width: 264px; padding-top: 3px; }
.cap { color: #a3a1c4; margin-top: 20px; }
.big { font-size: 48px; line-height: 56px; font-weight: 700; margin-top: 10px; }
.terms { font-size: 14px; line-height: 20px; font-weight: 500; margin-top: 6px; }
.legend { width: 137px; margin: 16px 0 0 46px; color: #8592a3; flex: none; }
.legend li { display: flex; align-items: center; gap: 5px; height: 31px; }
.legend li::before { content: ""; width: 12px; height: 12px; border-radius: 6px; background: #f05; }
.legend .c2::before { background: #0086cc; }
.legend .c3::before { background: #ffd6ea; }
.legend .c4::before { background: #ab9af5; }
.legend .c5::before { background: #f9cd46; }
.filters-v { display: grid; grid-template-columns: 40px 145px; gap: 25px 7px; align-content: start; align-items: center; text-align: right; padding-top: 1px; }
.select { display: grid; grid-template-columns: 1fr 32px; align-items: center; width: 145px; height: 31px; border: 1px solid #e2e2e2; border-radius: 8px; background: #fff; }
.select select { grid-area: 1 / 1 / 2 / 3; appearance: none; border: 0; background: none; height: 29px; padding: 0 13px; font: 12px Roboto, sans-serif; color: #858585; }
.select svg { grid-area: 1 / 2; width: 14px; height: 14px; margin-left: 6px; color: #7b8ba0; pointer-events: none; }
.details { display: flex; align-items: center; gap: 4px; color: #75719c; font-size: 11px; }
.details span { text-decoration: underline; text-underline-offset: 2px; }
.balances .details { margin-left: auto; align-self: flex-end; }
.orders { padding: 27px 25px 12px; }
.filters-h { display: flex; align-items: center; gap: 7px; margin: 19px 0 25px; }
.filters-h .select + label { margin-left: 18px; }
table { width: 100%; table-layout: fixed; border-spacing: 0; font-size: 10px; font-weight: 500; }
.w120 { width: 120px; } .w133 { width: 133px; } .w96 { width: 96px; } .w84 { width: 84px; } .w101 { width: 101px; } .w86 { width: 86px; } .w90 { width: 90px; }
th, td { text-align: left; padding: 0 0 0 17px; font-weight: 500; white-space: nowrap; }
th { height: 51px; border-top: 1px solid #dcdcdc; border-bottom: 1px solid #e0e0e0; }
td { height: 45px; border-bottom: 1px solid #e0e0e0; }
tr:last-child td { height: 42px; border-bottom: 0; }
td button { color: #ffd60a; }
.track { height: 4px; border-radius: 2px; background: #e2e2e2; }
.thumb { width: 206px; height: 4px; border-radius: 2px; background: #a09fc0; }
.foot { margin-top: 9px; height: 25px; border-radius: 5px; background: #f4f4f4; display: flex; justify-content: flex-end; padding-right: 14px; }
.pager { display: flex; justify-content: flex-end; gap: 3px; margin-top: 17px; }
.pager button { width: 21px; height: 21px; border-radius: 5px; background: #e0e0e0; font-size: 12px; font-weight: 500; }
.pager .arrow { background: none; }
.pager .now { background: #0086cc; color: #fff; }
.sel-frame { position: absolute; left: -1px; top: -1px; width: 224px; height: 773px; border: 2px solid #f0103c; outline: 1px solid #b084f2; border-right: 1px solid #ff5a5a; }
.size { position: absolute; left: 79px; top: 779px; width: 62px; height: 17px; border-radius: 2px; background: #8f0fff; color: #fff; font: 600 11px/17px Inter, sans-serif; text-align: center; }
.measure { position: absolute; left: 223px; right: 0; top: 385px; border-top: 1px solid #ff0a28; display: flex; justify-content: center; }
.measure span { margin-top: 6px; background: #ff0a28; color: #fff; border-radius: 2px; padding: 0 4px; font: 600 11px/17px Inter, sans-serif; }
.board-dark { position: absolute; left: 1325px; top: 41px; width: 1234px; height: 771px; border-radius: 8px; background: linear-gradient(#12161d 56px, #2b2a33 56px); }
.chip { position: absolute; left: 14px; top: 115px; width: 60px; height: 37px; border-radius: 8px; background: #3a3d42; }
.pill { position: absolute; left: 9px; top: 539px; width: 8px; height: 40px; border-radius: 4px; background: #1c1b22; border: 1px solid #66656c; }
.wire { position: absolute; left: 1306px; top: 0; }
.hscroll { position: absolute; left: 55px; bottom: 5px; width: 60px; height: 6px; border-radius: 3px; background: #9b9b9b; }

/* inspect panel */
.inspect { flex: 0 0 241px; position: relative; background: #fff; overflow: hidden; border-left: 1px solid #f0f0f0; }
.inspect h2 { font-weight: 600; line-height: 32px; display: flex; justify-content: space-between; }
.modes { display: flex; gap: 16px; height: 41px; padding: 0 16px; align-items: center; border-bottom: 1px solid #e3e3e3; color: #b3b3b3; }
.modes .cur { font-weight: 600; color: #333; }
.sec { padding: 8px 16px 4px; border-bottom: 1px solid #e3e3e3; }
.name { display: flex; align-items: center; gap: 8px; height: 41px; padding: 0 16px; font-weight: 600; }
.row32 { display: flex; align-items: center; gap: 8px; height: 32px; }
.strong { font-weight: 600; }
.end { margin-left: auto; margin-right: 5px; }
.props dl { display: grid; grid-template-columns: 50px 1fr; line-height: 24px; padding: 4px 0; }
dt { color: #b3b3b3; }
dd { font-weight: 500; }
.hex { gap: 6px; margin-right: 8px; font-weight: 600; }
.hex svg { color: #999; }
.val { display: flex; align-items: center; height: 28px; }
.val span { flex: 0 0 64px; }
.val > :first-child:not(span) { margin-right: 20px; }
.val .alone { margin-left: 32px; }
.val em { font-style: normal; color: #b3b3b3; }
.swatch { width: 16px; height: 16px; background: #fafafa; border: 1px solid #e3e3e3; }
.val > .swatch:first-child:not(span) { margin-right: 16px; }
.colors .val { margin: 6px 0; }
.borders h2 { margin-bottom: 2px; }
.borders { padding-bottom: 10px; }
.code { padding: 8px 16px; }
.lang-row { display: flex; align-items: center; height: 32px; padding-right: 3px; }
.lang-row button:first-child { margin-right: auto; gap: 5px; }
.lang-row button:first-child svg { color: #999; }
.tg { width: 24px; height: 24px; border-radius: 2px; }
.tg.on { background: #e5e5e5; }
pre { font: 11px/18px "DejaVu Sans Mono", monospace; color: #444; margin-top: 16px; white-space: pre-wrap; }
pre i { font-style: normal; color: #b3b3b3; }
pre b { font-weight: 400; color: #f24e1e; }
pre u { text-decoration: none; color: #10b078; }
.mini { display: inline-block; width: 12px; height: 12px; border: 1px solid #ccc; border-radius: 2px; background: #fafafa; vertical-align: -2px; }
.hang { display: block; padding-left: 22px; text-indent: -22px; }
.help { position: absolute; right: 24px; bottom: 24px; width: 36px; height: 36px; border-radius: 18px; background: #2c2c2c; }

/* download shelf */
.shelf { flex: 0 0 61px; display: flex; align-items: center; background: #f7f7f7; border-top: 1px solid #bdbdbd; padding: 0 11px 2px 0; font: 16px/24px "Noto Sans", sans-serif; }
.file { width: 237px; height: 47px; border-right: 1px solid #bdbdbd; padding: 0 16px 0 21px; justify-content: flex-start; gap: 14px; }
.caret { margin-left: auto; color: #666; }
.show { margin-left: auto; width: 89px; height: 32px; border: 1px solid #bcbcbc; border-radius: 4px; background: #ebebeb; font-size: 15px; font-weight: 600; }
.bye { margin-left: 11px; color: #666; }
```
